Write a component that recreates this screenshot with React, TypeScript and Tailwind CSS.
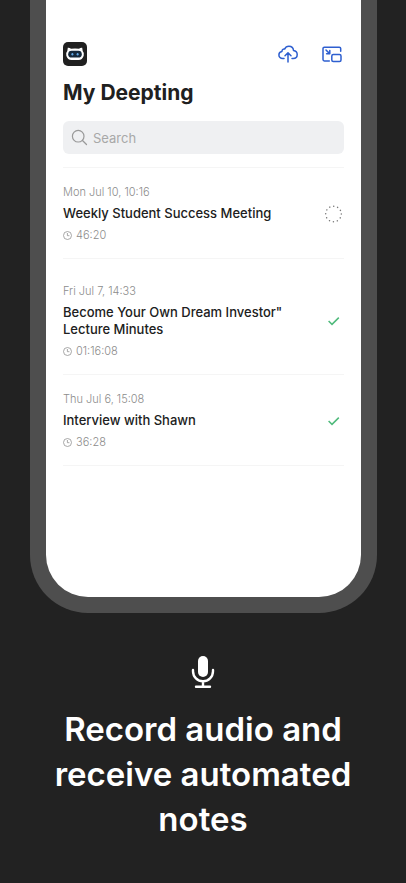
type Note = { date: string; title: string; length: string; done: boolean; spacing: string };

const notes: Note[] = [
  { date: 'Mon Jul 10, 10:16', title: 'Weekly Student Success Meeting', length: '46:20', done: false, spacing: 'pt-4' },
  { date: 'Fri Jul 7, 14:33', title: 'Become Your Own Dream Investor" Lecture Minutes', length: '01:16:08', done: true, spacing: 'pt-6' },
  { date: 'Thu Jul 6, 15:08', title: 'Interview with Shawn', length: '36:28', done: true, spacing: 'pt-4' },
];

function Logo() {
  return (
    <svg className="size-6" viewBox="0 0 24 24" role="img" aria-label="Deepting">
      <rect width="24" height="24" rx="5" fill="#202020" />
      <path d="M4.8 5.8Q6.6 5.6 8 6.8 12 6.2 16 6.8 17.4 5.6 19.2 5.8L19.7 9Q21.6 11 20.7 13.8 19.4 18 15.5 18H8.5Q4.6 18 3.3 13.8 2.4 11 4.3 9Z" fill="#fff" />
      <rect x="5.2" y="8.8" width="13.6" height="6.8" rx="3.4" fill="#14283b" />
      <ellipse cx="9.4" cy="12.2" rx="1" ry="1.3" fill="#62a9e8" />
      <ellipse cx="14.6" cy="12.2" rx="1" ry="1.3" fill="#62a9e8" />
    </svg>
  );
}

function CloudIcon() {
  return (
    <svg className="h-5 w-5" viewBox="0 0 20 20" fill="none" stroke="#2e5fd0" strokeWidth="1.5" strokeLinecap="round" strokeLinejoin="round" aria-hidden="true">
      <path d="M6 14.5H4.7C2.4 14.5.9 13 .9 11 .9 9 2.3 7.6 4 7.4 3.9 5.8 5.2 4.7 6.6 5.1 7.4 3.2 9 2.2 10.9 2.2c2.6 0 4.4 1.8 4.6 4.3 2.2.4 3.7 1.9 3.7 4 0 2.4-1.8 4-4 4H14" />
      <path d="M10 18V9M7 11.8 10 8.8l3 3" />
    </svg>
  );
}

function PipIcon() {
  return (
    <svg className="h-5 w-5" viewBox="0 0 20 20" fill="none" stroke="#2e5fd0" strokeWidth="1.5" strokeLinecap="round" strokeLinejoin="round" aria-hidden="true">
      <path d="M18.7 7.3V4.6a1.4 1.4 0 0 0-1.4-1.4H2.4A1.4 1.4 0 0 0 1 4.6v11a1.4 1.4 0 0 0 1.4 1.4h4.9" />
      <rect x="9.8" y="10.6" width="9.2" height="7" rx="1.5" />
      <path d="m4 6 3.6 3.6M7.8 6.5v3.3H4.6" />
    </svg>
  );
}

function Spinner() {
  return (
    <svg className="size-5" viewBox="0 0 20 20" role="img" aria-label="Processing">
      <circle cx="9.5" cy="10" r="7.8" fill="none" stroke="#777" strokeWidth="1.5" strokeLinecap="round" strokeDasharray="0.01 4.074" />
    </svg>
  );
}

function Check() {
  return (
    <svg className="size-5" viewBox="0 0 20 20" fill="none" role="img" aria-label="Ready">
      <path d="m4.6 10 3.4 3.4 6.8-6.8" stroke="#50ba7c" strokeWidth="1.5" />
    </svg>
  );
}

function NoteRow({ note }: { note: Note }) {
  return (
    <li className={`flex items-center justify-between border-b border-[#f5f5f5] pb-[15px] ${note.spacing}`}>
      <div className="flex w-[240px] flex-col gap-[5px]">
        <p className="text-[11px] leading-4 font-light text-[#8c8c8c]">{note.date}</p>
        <h2 className="text-[13px] leading-[17px] font-medium text-[#202020]">{note.title}</h2>
        <p className="flex items-center gap-1 text-[11px] leading-4 font-light text-[#8c8c8c]">
          <svg className="size-[9px]" viewBox="0 0 9 9" fill="none" stroke="#929292" strokeWidth="0.8" aria-hidden="true">
            <circle cx="4.5" cy="4.5" r="4" />
            <path d="M4.4 2v2.7h2" />
          </svg>
          {note.length}
        </p>
      </div>
      {note.done ? <Check /> : <Spinner />}
    </li>
  );
}

export default function App() {
  return (
    <div className="min-h-screen bg-[#222] font-['Inter',sans-serif]">
      <main className="mr-[29px] ml-[30px]">
        <section className="rounded-b-[58px] border-x-[16px] border-b-[16px] border-[#4e4e4e] bg-white px-[17px] pt-[42px] pb-[131px]">
          <header className="flex items-center justify-between">
            <Logo />
            <div className="flex gap-6 pr-[2px]">
              <button type="button" aria-label="Upload" className="flex"><CloudIcon /></button>
              <button type="button" aria-label="Picture in picture" className="flex"><PipIcon /></button>
            </div>
          </header>
          <h1 className="mt-[13px] text-[21px] leading-7 font-bold text-[#202020]">My Deepting</h1>
          <label className="mt-[14px] flex h-[33px] items-center gap-[5px] rounded-md bg-[#eff0f2] px-2">
            <svg className="size-[17px] shrink-0" viewBox="0 0 17 17" fill="none" stroke="#999" strokeWidth="1.2" strokeLinecap="round" aria-hidden="true">
              <circle cx="7.2" cy="7.2" r="5.8" />
              <path d="m11.5 11.5 4 4" />
            </svg>
            <input type="search" aria-label="Search" placeholder="Search" className="min-w-0 flex-1 bg-transparent text-[13px] leading-5 font-normal outline-none placeholder:text-[#a8a8a8]" />
          </label>
          <ul className="mt-[13px] border-t border-[#f5f5f5]">
            {notes.map((note) => <NoteRow key={note.title} note={note} />)}
          </ul>
        </section>
      </main>
      <section className="flex flex-col items-center px-10 pt-[42px] text-white">
        <svg className="h-[34px] w-6" viewBox="0 0 24 34" fill="none" stroke="#fff" strokeWidth="2.4" strokeLinecap="round" aria-hidden="true">
          <rect x="7" y="1" width="10" height="21" rx="5" fill="#fff" stroke="none" />
          <path d="M2 15v1.3a10 10 0 0 0 20 0V15M12 26.5V31.5M5 31.8h14" />
        </svg>
        <h2 className="mt-[18px] text-center text-[33px] leading-[45px] font-semibold">Record audio and receive automated notes</h2>
      </section>
    </div>
  );
}
